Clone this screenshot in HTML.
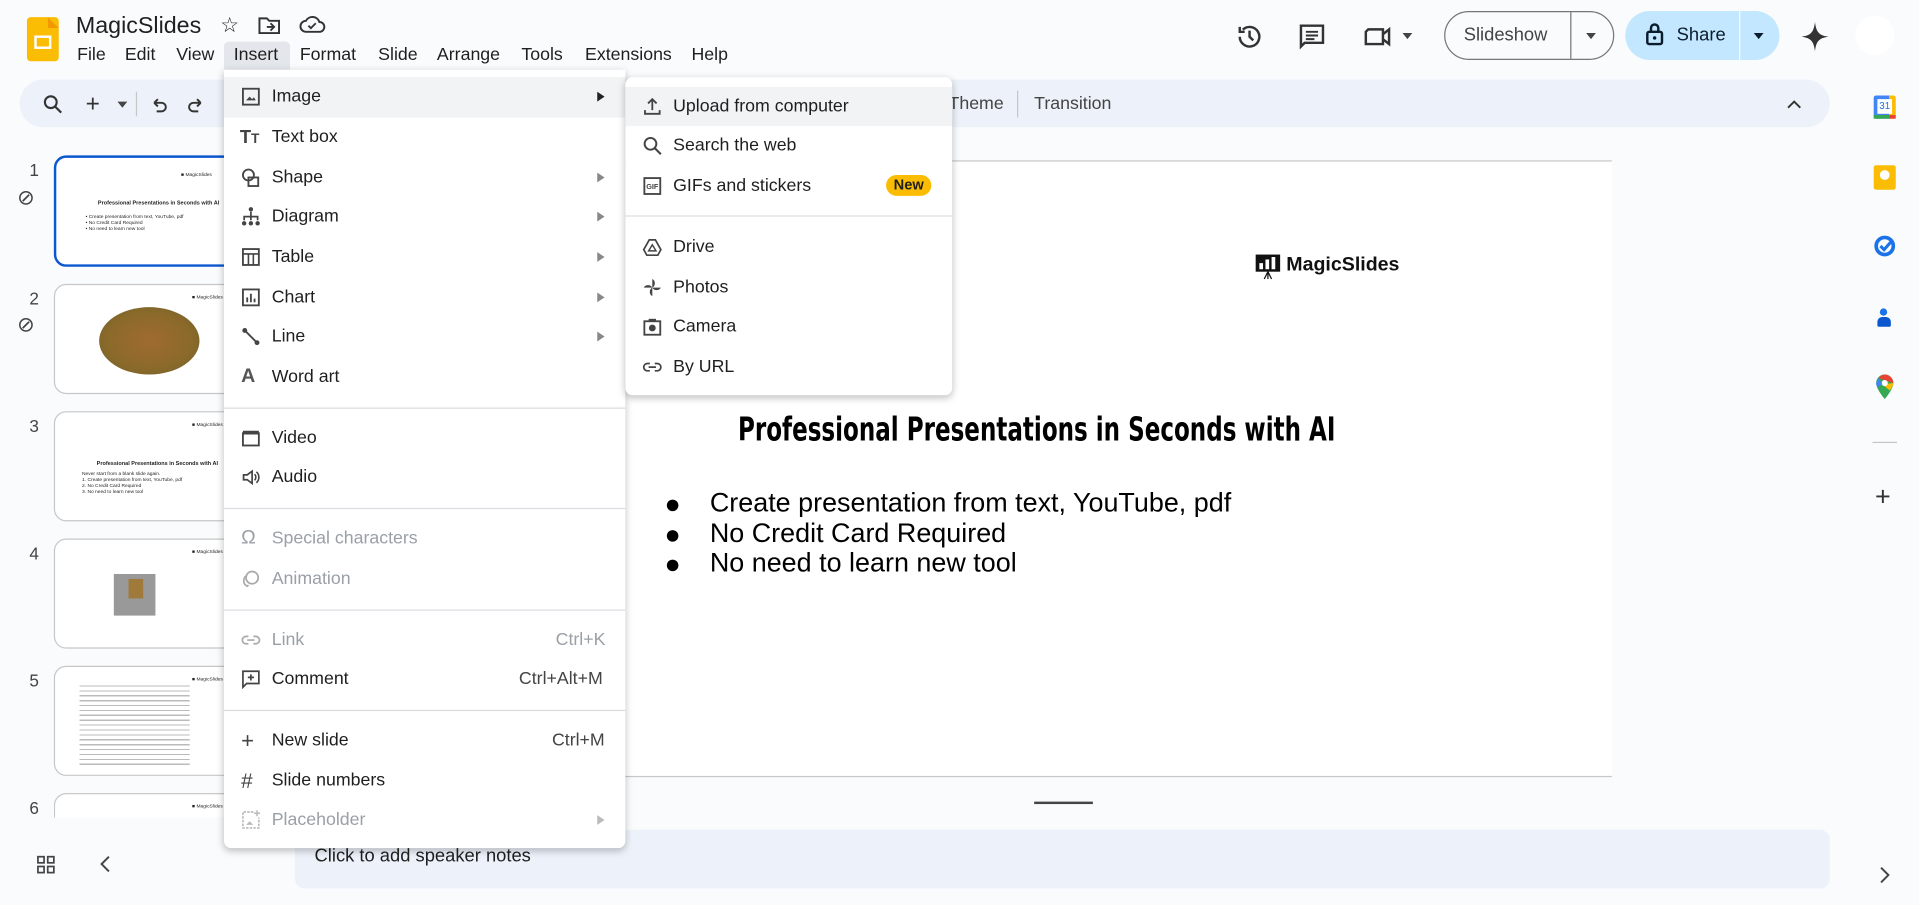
<!DOCTYPE html>
<html><head><meta charset="utf-8"><style>
*{margin:0;padding:0;box-sizing:border-box}
html,body{width:1919px;height:905px;overflow:hidden;background:#f9fbfd;font-family:"Liberation Sans",Arial,sans-serif;color:#1f1f1f}
#w{position:absolute;left:0;top:0;width:1568px;height:739px;transform:scale(1.22385);transform-origin:0 0}
.a{position:absolute}
.t{position:absolute;white-space:nowrap;line-height:1}
.menu .t{font-size:14.5px}
.ic{position:absolute;width:16px;height:16px}
.arr{position:absolute;width:0;height:0;border-top:4px solid transparent;border-bottom:4px solid transparent;border-left:6px solid #444}
.sep{position:absolute;height:1px;background:#dadce0}
.thumb{position:absolute;left:44px;width:160px;background:#fff;border:1px solid #c7c7c7;border-radius:10px;overflow:hidden}
.num{position:absolute;left:24px;font-size:14px;color:#444}
.g{color:#9aa0a6}
</style></head><body><div id="w">

<div class="a" style="left:22px;top:14px;width:26px;height:36px;background:#fbbc04;border-radius:3px"></div>
<div class="a" style="left:39px;top:14px;width:9px;height:9px;background:#f29900;clip-path:polygon(0 0,100% 100%,0 100%)"></div>
<div class="a" style="left:28px;top:29px;width:14px;height:11px;border:2px solid #fff"></div>
<div class="t" style="left:62px;top:12px;font-size:19px">MagicSlides</div>
<div class="t" style="left:180px;top:12px;font-size:17px">☆</div>
<svg class="a" style="left:210px;top:12px" width="20" height="18" viewBox="0 0 20 18"><path d="M2 3h6l2 2h8v10H2z" fill="none" stroke="#333" stroke-width="1.6"/><path d="M8 10h6M11 7l3 3-3 3" fill="none" stroke="#333" stroke-width="1.5"/></svg>
<svg class="a" style="left:244px;top:11px" width="22" height="18" viewBox="0 0 22 18"><path d="M6 15h11a4 4 0 0 0 0-8 6 6 0 0 0-11-1 4.5 4.5 0 0 0 0 9z" fill="none" stroke="#333" stroke-width="1.6"/><path d="M8 10l2 2 4-4" fill="none" stroke="#333" stroke-width="1.5"/></svg>

<div class="a" style="left:183px;top:34px;width:54px;height:23px;background:#e3e6ea;border-radius:4px 4px 0 0"></div>
<div class="t" style="left:63px;top:38px;font-size:14.5px">File</div>
<div class="t" style="left:102px;top:38px;font-size:14.5px">Edit</div>
<div class="t" style="left:144px;top:38px;font-size:14.5px">View</div>
<div class="t" style="left:191px;top:38px;font-size:14.5px">Insert</div>
<div class="t" style="left:245px;top:38px;font-size:14.5px">Format</div>
<div class="t" style="left:309px;top:38px;font-size:14.5px">Slide</div>
<div class="t" style="left:357px;top:38px;font-size:14.5px">Arrange</div>
<div class="t" style="left:426px;top:38px;font-size:14.5px">Tools</div>
<div class="t" style="left:478px;top:38px;font-size:14.5px">Extensions</div>
<div class="t" style="left:565px;top:38px;font-size:14.5px">Help</div>

<svg class="a" style="left:1009px;top:18px" width="24" height="24" viewBox="0 0 24 24"><path d="M4 12a8 8 0 1 0 2.5-5.8M4 4v4h4" fill="none" stroke="#333" stroke-width="2"/><path d="M12 7v5l3 3" fill="none" stroke="#333" stroke-width="2"/></svg>
<svg class="a" style="left:1060px;top:18px" width="24" height="24" viewBox="0 0 24 24"><path d="M3 3h18v14H6l-3 3z" fill="none" stroke="#333" stroke-width="2"/><path d="M7 8h10M7 11h10M7 14h7" stroke="#333" stroke-width="1.6"/></svg>
<svg class="a" style="left:1114px;top:18px" width="26" height="24" viewBox="0 0 26 24"><path d="M4 6h12v12H2V8z" fill="none" stroke="#333" stroke-width="2"/><path d="M16 10l5-4v12l-5-4" fill="none" stroke="#333" stroke-width="2"/></svg>
<div class="a" style="left:1146px;top:27px;border-left:4px solid transparent;border-right:4px solid transparent;border-top:5px solid #444"></div>
<div class="a" style="left:1180px;top:9px;width:139px;height:40px;border:1px solid #747775;border-radius:20px"></div>
<div class="a" style="left:1283px;top:10px;width:1px;height:38px;background:#747775"></div>
<div class="t" style="left:1196px;top:21px;font-size:15px;color:#444">Slideshow</div>
<div class="a" style="left:1296px;top:27px;border-left:4px solid transparent;border-right:4px solid transparent;border-top:5px solid #444"></div>
<div class="a" style="left:1328px;top:9px;width:126px;height:40px;background:#c2e7ff;border-radius:20px"></div>
<div class="a" style="left:1421px;top:9px;width:1px;height:40px;background:#f9fbfd"></div>
<svg class="a" style="left:1344px;top:18px" width="16" height="20" viewBox="0 0 16 20"><rect x="2" y="8" width="12" height="10" rx="1.5" fill="none" stroke="#0b1c2c" stroke-width="2"/><path d="M5 8V5a3 3 0 0 1 6 0v3" fill="none" stroke="#0b1c2c" stroke-width="2"/><circle cx="8" cy="13" r="1.4" fill="#0b1c2c"/></svg>
<div class="t" style="left:1370px;top:21px;font-size:15px;color:#0b1c2c">Share</div>
<div class="a" style="left:1433px;top:27px;border-left:4px solid transparent;border-right:4px solid transparent;border-top:5px solid #0b1c2c"></div>
<svg class="a" style="left:1471px;top:17px" width="24" height="26" viewBox="0 0 24 26"><path d="M12 1C13 9 15 12 23 13 15 14 13 17 12 25 11 17 9 14 1 13 9 12 11 9 12 1z" fill="#333"/></svg>
<div class="a" style="left:1516px;top:13px;width:32px;height:32px;border-radius:50%;background:#fff"></div>

<div class="a" style="left:16px;top:65px;width:1479px;height:39px;background:#edf2fa;border-radius:20px"></div>
<svg class="a" style="left:35px;top:77px" width="16" height="16" viewBox="0 0 16 16"><circle cx="6.5" cy="6.5" r="4.8" fill="none" stroke="#333" stroke-width="1.7"/><path d="M10 10l5 5" stroke="#333" stroke-width="1.8"/></svg>
<div class="t" style="left:70px;top:75px;font-size:20px;color:#333">+</div>
<div class="a" style="left:96px;top:83px;border-left:4px solid transparent;border-right:4px solid transparent;border-top:5px solid #444"></div>
<div class="a" style="left:111px;top:75px;width:1px;height:20px;background:#c4c7c5"></div>
<svg class="a" style="left:122px;top:78px" width="16" height="16" viewBox="0 0 16 16"><path d="M4 6h6a3.5 3.5 0 0 1 0 7H6M4 6l3-3M4 6l3 3" fill="none" stroke="#333" stroke-width="1.6"/></svg>
<svg class="a" style="left:152px;top:78px" width="16" height="16" viewBox="0 0 16 16"><path d="M12 6H6a3.5 3.5 0 0 0 0 7h4M12 6L9 3M12 6L9 9" fill="none" stroke="#333" stroke-width="1.6"/></svg>
<div class="t" style="left:775px;top:78px;font-size:14.5px;color:#444">Theme</div>
<div class="a" style="left:831px;top:74px;width:1px;height:22px;background:#c4c7c5"></div>
<div class="t" style="left:845px;top:78px;font-size:14.5px;color:#444">Transition</div>
<svg class="a" style="left:1459px;top:80px" width="14" height="10" viewBox="0 0 14 10"><path d="M2 8l5-5 5 5" fill="none" stroke="#333" stroke-width="1.6"/></svg>

<div class="num" style="top:131px">1</div>
<div class="num" style="top:236px">2</div>
<div class="num" style="top:340px">3</div>
<div class="num" style="top:444px">4</div>
<div class="num" style="top:548px">5</div>
<div class="num" style="top:652px">6</div>
<div class="t" style="left:14px;top:153px;font-size:17px;color:#444">⊘</div>
<div class="t" style="left:14px;top:257px;font-size:17px;color:#444">⊘</div>
<div class="thumb" style="top:127px;height:91px;border:2px solid #0b57d0">
 <div class="t" style="left:102px;top:12px;font-size:4px">■ MagicSlides</div>
 <div class="t" style="left:34px;top:35px;font-size:4.5px;font-weight:bold">Professional Presentations in Seconds with AI</div>
 <div class="t" style="left:24px;top:45px;font-size:4px;line-height:5px">• Create presentation from text, YouTube, pdf<br>• No Credit Card Required<br>• No need to learn new tool</div>
</div>
<div class="thumb" style="top:232px;height:90px">
 <div class="t" style="left:112px;top:8px;font-size:4px">■ MagicSlides</div>
 <div class="a" style="left:36px;top:18px;width:82px;height:55px;border-radius:50%;background:radial-gradient(#a06a30,#8a6a2a 60%,#6b5a28)"></div>
</div>
<div class="thumb" style="top:336px;height:90px">
 <div class="t" style="left:112px;top:8px;font-size:4px">■ MagicSlides</div>
 <div class="t" style="left:34px;top:40px;font-size:4.5px;font-weight:bold">Professional Presentations in Seconds with AI</div>
 <div class="t" style="left:22px;top:47px;font-size:4px;line-height:5px">Never start from a blank slide again.<br>1. Create presentation from text, YouTube, pdf<br>2. No Credit Card Required<br>3. No need to learn new tool</div>
</div>
<div class="thumb" style="top:440px;height:90px">
 <div class="t" style="left:112px;top:8px;font-size:4px">■ MagicSlides</div>
 <div class="a" style="left:48px;top:28px;width:34px;height:34px;background:#999"></div>
 <div class="a" style="left:60px;top:32px;width:12px;height:16px;background:#a07a3a"></div>
</div>
<div class="thumb" style="top:544px;height:90px">
 <div class="t" style="left:112px;top:8px;font-size:4px">■ MagicSlides</div>
 <div class="a" style="left:20px;top:12px;width:90px;height:70px;background:repeating-linear-gradient(#fff 0 3px,#bbb 3px 4px)"></div>
</div>
<div class="thumb" style="top:648px;height:30px;border-bottom:none">
 <div class="t" style="left:112px;top:8px;font-size:4px">■ MagicSlides</div>
</div>
<div class="a" style="left:0;top:668px;width:240px;height:71px;background:#f9fbfd"></div>
<svg class="a" style="left:30px;top:699px" width="15" height="15" viewBox="0 0 15 15"><g fill="none" stroke="#444" stroke-width="1.4"><rect x="1" y="1" width="5" height="5"/><rect x="9" y="1" width="5" height="5"/><rect x="1" y="9" width="5" height="5"/><rect x="9" y="9" width="5" height="5"/></g></svg>
<svg class="a" style="left:81px;top:699px" width="10" height="14" viewBox="0 0 10 14"><path d="M8 1L2 7l6 6" fill="none" stroke="#444" stroke-width="1.6"/></svg>

<div class="a" style="left:421px;top:131px;width:896px;height:504px;background:#fff;border-top:1px solid #c7c7c7;border-bottom:1px solid #c7c7c7"></div>
<svg class="a" style="left:1025px;top:207px" width="22" height="22" viewBox="0 0 22 22"><rect x="1" y="1" width="20" height="14" fill="#111"/><rect x="4" y="8" width="3" height="5" fill="#fff"/><rect x="9" y="5" width="3" height="8" fill="#fff"/><rect x="14" y="3" width="3" height="10" fill="#fff"/><path d="M11 15l-3 6M11 15l3 6M11 15v6" stroke="#111" stroke-width="1"/></svg>
<div class="t" style="left:1051px;top:209px;font-size:16px;font-weight:bold;color:#111">MagicSlides</div>
<div class="t" style="left:603px;top:338px;font-size:27px;font-weight:bold;color:#000;font-family:'Liberation Sans Narrow','DejaVu Sans Condensed',sans-serif;transform:scaleX(0.775);transform-origin:0 0">Professional Presentations in Seconds with AI</div>
<div class="t" style="left:543px;top:400px;font-size:22px;line-height:24.5px;color:#000">●<br>●<br>●</div>
<div class="t" style="left:580px;top:399px;font-size:22px;line-height:24.5px;color:#000">Create presentation from text, YouTube, pdf<br>No Credit Card Required<br>No need to learn new tool</div>
<div class="a" style="left:845px;top:655px;width:48px;height:2px;background:#444"></div>

<div class="a" style="left:241px;top:678px;width:1254px;height:48px;background:#edf2fa;border-radius:8px"></div>
<div class="t" style="left:257px;top:692px;font-size:15px">Click to add speaker notes</div>

<div class="a" style="left:1531px;top:78px;width:18px;height:19px;border-radius:2px;background:linear-gradient(90deg,#4285f4 0 70%,#fbbc04 70%);"></div>
<div class="a" style="left:1534px;top:81px;width:12px;height:12px;background:#fff;font-size:8px;color:#1a73e8;text-align:center;line-height:12px">31</div>
<div class="a" style="left:1531px;top:94px;width:18px;height:3px;background:linear-gradient(90deg,#34a853 0 70%,#ea4335 70%)"></div>
<div class="a" style="left:1531px;top:135px;width:18px;height:20px;background:#fbbc04;border-radius:2px"></div>
<div class="a" style="left:1536px;top:139px;width:8px;height:8px;border-radius:50%;background:#fff"></div>
<svg class="a" style="left:1531px;top:191px" width="20" height="20" viewBox="0 0 20 20"><circle cx="9" cy="10" r="7" fill="none" stroke="#1a73e8" stroke-width="3"/><path d="M5.5 10l3 3 7-8" fill="none" stroke="#1a73e8" stroke-width="2.5"/></svg>
<div class="a" style="left:1536px;top:252px;width:6px;height:6px;border-radius:50%;background:#1a73e8"></div>
<div class="a" style="left:1534px;top:259px;width:11px;height:8px;border-radius:4px 4px 1px 1px;background:#0b57d0"></div>
<svg class="a" style="left:1532px;top:305px" width="16" height="22" viewBox="0 0 16 22"><path d="M8 1a7 7 0 0 1 7 7c0 5-7 13-7 13S1 13 1 8a7 7 0 0 1 7-7z" fill="#34a853"/><path d="M8 1a7 7 0 0 1 7 7L3 4a7 7 0 0 1 5-3z" fill="#ea4335"/><path d="M15 8c0 2-2 5-3 6L6 9z" fill="#fbbc04"/><circle cx="8" cy="8" r="2.5" fill="#fff"/><path d="M3 4L1 8c0 1 .3 2 1 3.5L6 9z" fill="#4285f4"/></svg>
<div class="a" style="left:1530px;top:361px;width:20px;height:1px;background:#c4c7c5"></div>
<div class="t" style="left:1532px;top:395px;font-size:22px;color:#333">+</div>
<svg class="a" style="left:1535px;top:708px" width="10" height="14" viewBox="0 0 10 14"><path d="M2 1l6 6-6 6" fill="none" stroke="#444" stroke-width="1.6"/></svg>

<div class="a menu" style="left:183px;top:57px;width:328px;height:636px;background:#fff;border-radius:0 0 6px 6px;box-shadow:0 2px 6px rgba(0,0,0,.25)">
 <div class="a" style="left:0;top:6px;width:328px;height:33px;background:#f1f3f4"></div>
</div>
<div class="menu">
 <svg class="ic" style="left:197px;top:71px" viewBox="0 0 16 16"><rect x="1.5" y="1.5" width="13" height="13" fill="none" stroke="#444" stroke-width="1.5"/><path d="M4 11l3-3 2 2 1.5-1.5L12 11z" fill="#444"/></svg>
 <div class="t" style="left:196px;top:105px;font-size:15px;font-weight:bold;color:#444">T<span style="font-size:11px">T</span></div>
 <svg class="ic" style="left:197px;top:137px" viewBox="0 0 16 16"><circle cx="6" cy="6" r="4.5" fill="none" stroke="#444" stroke-width="1.5"/><rect x="6" y="8" width="8" height="7" fill="none" stroke="#444" stroke-width="1.5"/></svg>
 <svg class="ic" style="left:197px;top:169px" viewBox="0 0 16 16"><g fill="#444"><circle cx="8" cy="2" r="1.8"/><circle cx="2.5" cy="13.5" r="1.8"/><circle cx="8" cy="13.5" r="1.8"/><circle cx="13.5" cy="13.5" r="1.8"/></g><path d="M8 4v7M2.5 11V8h11v3" fill="none" stroke="#444" stroke-width="1.4"/></svg>
 <svg class="ic" style="left:197px;top:202px" viewBox="0 0 16 16"><rect x="1.5" y="1.5" width="13" height="13" fill="none" stroke="#444" stroke-width="1.5"/><path d="M1.5 5.5h13M6 5.5v9M10 5.5v9" stroke="#444" stroke-width="1.3"/></svg>
 <svg class="ic" style="left:197px;top:235px" viewBox="0 0 16 16"><rect x="1.5" y="1.5" width="13" height="13" fill="none" stroke="#444" stroke-width="1.5"/><path d="M5 12V8M8 12V5M11 12V9" stroke="#444" stroke-width="1.5"/></svg>
 <svg class="ic" style="left:197px;top:267px" viewBox="0 0 16 16"><path d="M3 3l10 10" stroke="#444" stroke-width="1.5"/><circle cx="3" cy="3" r="2" fill="#444"/><circle cx="13" cy="13" r="2" fill="#444"/></svg>
 <div class="t" style="left:197px;top:300px;font-size:16px;font-weight:bold;color:#555">A</div>
 <svg class="ic" style="left:197px;top:350px" viewBox="0 0 16 16"><rect x="1.5" y="4" width="13" height="10" fill="none" stroke="#444" stroke-width="1.5"/><path d="M1.5 2h13v3h-13z" fill="#444"/></svg>
 <svg class="ic" style="left:197px;top:382px" viewBox="0 0 16 16"><path d="M2 6h3l4-3v10l-4-3H2z" fill="none" stroke="#444" stroke-width="1.4"/><path d="M11 5.5a3.5 3.5 0 0 1 0 5M12.5 3.5a6 6 0 0 1 0 9" fill="none" stroke="#444" stroke-width="1.3"/></svg>
 <div class="t g" style="left:197px;top:432px;font-size:16px">Ω</div>
 <svg class="ic" style="left:197px;top:465px" viewBox="0 0 16 16"><circle cx="9" cy="7" r="5" fill="none" stroke="#aaa" stroke-width="1.4"/><path d="M5 5a5 5 0 0 0 0 9 5 5 0 0 0 1-1" fill="none" stroke="#aaa" stroke-width="1.4"/></svg>
 <svg class="ic" style="left:197px;top:515px" viewBox="0 0 16 16"><path d="M6 5H4a3 3 0 0 0 0 6h2M10 5h2a3 3 0 0 1 0 6h-2M5 8h6" fill="none" stroke="#aaa" stroke-width="1.4"/></svg>
 <svg class="ic" style="left:197px;top:547px" viewBox="0 0 16 16"><path d="M1.5 1.5h13v10h-10l-3 3z" fill="none" stroke="#444" stroke-width="1.4"/><path d="M8 4v5M5.5 6.5h5" stroke="#444" stroke-width="1.4"/></svg>
 <div class="t" style="left:197px;top:596px;font-size:18px;color:#444">+</div>
 <div class="t" style="left:197px;top:630px;font-size:17px;color:#444">#</div>
 <svg class="ic" style="left:197px;top:662px" viewBox="0 0 16 16"><path d="M10 1.5H1.5v13h13V6" fill="none" stroke="#bbb" stroke-width="1.4" stroke-dasharray="2 1"/><path d="M13 0v5M10.5 2.5h5" stroke="#bbb" stroke-width="1.3"/><path d="M4 12l3-3 3 3z" fill="#bbb"/></svg>
 <div class="t" style="left:222px;top:72px">Image</div>
 <div class="t" style="left:222px;top:105px">Text box</div>
 <div class="t" style="left:222px;top:138px">Shape</div>
 <div class="t" style="left:222px;top:170px">Diagram</div>
 <div class="t" style="left:222px;top:203px">Table</div>
 <div class="t" style="left:222px;top:236px">Chart</div>
 <div class="t" style="left:222px;top:268px">Line</div>
 <div class="t" style="left:222px;top:301px">Word art</div>
 <div class="sep" style="left:183px;top:333px;width:328px"></div>
 <div class="t" style="left:222px;top:351px">Video</div>
 <div class="t" style="left:222px;top:383px">Audio</div>
 <div class="sep" style="left:183px;top:415px;width:328px"></div>
 <div class="t g" style="left:222px;top:433px">Special characters</div>
 <div class="t g" style="left:222px;top:466px">Animation</div>
 <div class="sep" style="left:183px;top:498px;width:328px"></div>
 <div class="t g" style="left:222px;top:516px">Link</div>
 <div class="t g" style="left:454px;top:516px">Ctrl+K</div>
 <div class="t" style="left:222px;top:548px">Comment</div>
 <div class="t" style="left:424px;top:548px;color:#444">Ctrl+Alt+M</div>
 <div class="sep" style="left:183px;top:580px;width:328px"></div>
 <div class="t" style="left:222px;top:598px">New slide</div>
 <div class="t" style="left:451px;top:598px;color:#444">Ctrl+M</div>
 <div class="t" style="left:222px;top:631px">Slide numbers</div>
 <div class="t g" style="left:222px;top:663px">Placeholder</div>
 <div class="arr" style="left:488px;top:75px;border-left-color:#222"></div>
 <div class="arr" style="left:488px;top:141px;border-left-color:#888"></div>
 <div class="arr" style="left:488px;top:173px;border-left-color:#888"></div>
 <div class="arr" style="left:488px;top:206px;border-left-color:#888"></div>
 <div class="arr" style="left:488px;top:239px;border-left-color:#888"></div>
 <div class="arr" style="left:488px;top:271px;border-left-color:#888"></div>
 <div class="arr" style="left:488px;top:666px;border-left-color:#bbb"></div>
</div>

<div class="menu">
 <div class="a" style="left:511px;top:63px;width:267px;height:260px;background:#fff;border-radius:6px;box-shadow:0 2px 6px rgba(0,0,0,.25)"></div>
 <div class="a" style="left:511px;top:71px;width:267px;height:32px;background:#f1f3f4"></div>
 <svg class="ic" style="left:525px;top:79px" viewBox="0 0 16 16"><path d="M8 11V2M4.5 5.5L8 2l3.5 3.5M2 11v3h12v-3" fill="none" stroke="#444" stroke-width="1.5"/></svg>
 <svg class="ic" style="left:525px;top:111px" viewBox="0 0 16 16"><circle cx="6.5" cy="6.5" r="4.8" fill="none" stroke="#444" stroke-width="1.6"/><path d="M10 10l5 5" stroke="#444" stroke-width="1.7"/></svg>
 <svg class="ic" style="left:525px;top:144px" viewBox="0 0 16 16"><rect x="1.5" y="1.5" width="13" height="13" fill="none" stroke="#444" stroke-width="1.5"/><text x="8" y="10.5" font-size="6" text-anchor="middle" font-family="Liberation Sans" font-weight="bold" fill="#444">GIF</text></svg>
 <svg class="ic" style="left:525px;top:194px" viewBox="0 0 16 16"><path d="M5.5 2h5l4.5 8-2.5 4.5h-9L1 10z" fill="none" stroke="#444" stroke-width="1.4"/><path d="M8 6l3 5H5z" fill="none" stroke="#444" stroke-width="1.2"/></svg>
 <svg class="ic" style="left:525px;top:227px" viewBox="0 0 16 16"><g fill="#444"><path d="M8 8V1a4 4 0 0 1 0 7z"/><path d="M8 8h7a4 4 0 0 1-7 0z"/><path d="M8 8v7a4 4 0 0 1 0-7z"/><path d="M8 8H1a4 4 0 0 1 7 0z"/></g></svg>
 <svg class="ic" style="left:525px;top:259px" viewBox="0 0 16 16"><rect x="1.5" y="3.5" width="13" height="11" fill="none" stroke="#444" stroke-width="1.5"/><rect x="5" y="1.5" width="6" height="2" fill="#444"/><circle cx="8" cy="9" r="2.8" fill="#444"/></svg>
 <svg class="ic" style="left:525px;top:292px" viewBox="0 0 16 16"><path d="M6 5H4a3 3 0 0 0 0 6h2M10 5h2a3 3 0 0 1 0 6h-2M5 8h6" fill="none" stroke="#444" stroke-width="1.4"/></svg>
 <div class="t" style="left:550px;top:80px">Upload from computer</div>
 <div class="t" style="left:550px;top:112px">Search the web</div>
 <div class="t" style="left:550px;top:145px">GIFs and stickers</div>
 <div class="a" style="left:724px;top:143px;width:37px;height:17px;background:#fbbc04;border-radius:9px;font-size:12px;font-weight:bold;line-height:17px;text-align:center;color:#1f1f1f">New</div>
 <div class="sep" style="left:511px;top:176px;width:267px"></div>
 <div class="t" style="left:550px;top:195px">Drive</div>
 <div class="t" style="left:550px;top:228px">Photos</div>
 <div class="t" style="left:550px;top:260px">Camera</div>
 <div class="t" style="left:550px;top:293px">By URL</div>
</div>

</div></body></html>
